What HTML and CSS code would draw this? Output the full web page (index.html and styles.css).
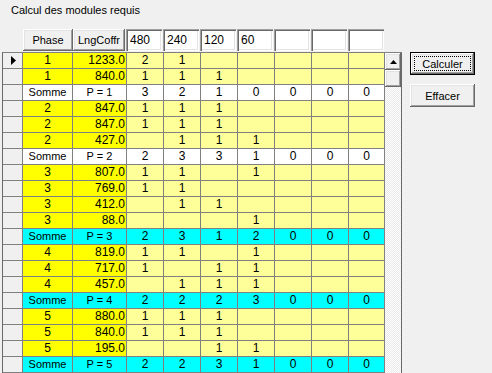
FILE: index.html
```html
<!DOCTYPE html>
<html>
<head>
    <link rel="stylesheet" href="styles.css">
</head>
<body>
    <div class="title">Calcul des modules requis</div>
    <div class="main">
        <div class="left">
            <div class="header">
                <div class="hbtn phase">Phase</div>
                <div class="hbtn lng">LngCoffr</div>
                <input class="hin" value="480">
                <input class="hin" value="240">
                <input class="hin" value="120">
                <input class="hin" value="60">
                <input class="hin" value="">
                <input class="hin" value="">
                <input class="hin" value="">
            </div>
            <div class="grid">
                <div id="rows" class="rows"></div>
                <div class="vscroll">
                    <div class="sb-up">
                        <svg width="7" height="4" viewBox="0 0 7 4"><polygon points="0,4 7,4 3.5,0" fill="#000"/></svg>
                    </div>
                    <div class="sb-thumb"></div>
                </div>
            </div>
        </div>
        <div class="actions">
            <button class="default">Calculer</button>
            <button>Effacer</button>
        </div>
    </div>
    <script>
        // kind: d = detail row, w = white total, c = cyan total
        const rows = [
            ['d', '1', '1233.0', '2', '1', '', '', '', '', ''],
            ['d', '1', '840.0', '1', '1', '1', '', '', '', ''],
            ['w', 'Somme', 'P = 1', '3', '2', '1', '0', '0', '0', '0'],
            ['d', '2', '847.0', '1', '1', '1', '', '', '', ''],
            ['d', '2', '847.0', '1', '1', '1', '', '', '', ''],
            ['d', '2', '427.0', '', '1', '1', '1', '', '', ''],
            ['w', 'Somme', 'P = 2', '2', '3', '3', '1', '0', '0', '0'],
            ['d', '3', '807.0', '1', '1', '', '1', '', '', ''],
            ['d', '3', '769.0', '1', '1', '', '', '', '', ''],
            ['d', '3', '412.0', '', '1', '1', '', '', '', ''],
            ['d', '3', '88.0', '', '', '', '1', '', '', ''],
            ['c', 'Somme', 'P = 3', '2', '3', '1', '2', '0', '0', '0'],
            ['d', '4', '819.0', '1', '1', '', '1', '', '', ''],
            ['d', '4', '717.0', '1', '', '1', '1', '', '', ''],
            ['d', '4', '457.0', '', '1', '1', '1', '', '', ''],
            ['c', 'Somme', 'P = 4', '2', '2', '2', '3', '0', '0', '0'],
            ['d', '5', '880.0', '1', '1', '1', '', '', '', ''],
            ['d', '5', '840.0', '1', '1', '1', '', '', '', ''],
            ['d', '5', '195.0', '', '', '1', '1', '', '', ''],
            ['c', 'Somme', 'P = 5', '2', '2', '3', '1', '0', '0', '0'],
        ];

        const grid = document.getElementById('rows');

        function cell(cls, text) {
            const el = document.createElement('div');
            el.className = cls;
            el.textContent = text;
            grid.appendChild(el);
            return el;
        }

        rows.forEach(function(r, i) {
            const kind = r[0];
            const ind = cell('ind', '');
            if (i === 0) {
                ind.innerHTML = '<svg width="5" height="9" viewBox="0 0 5 9"><polygon points="0,0 5,4.5 0,9" fill="#000"/></svg>';
            }
            if (kind === 'd') {
                cell('ph', r[1]);
                cell('lg', r[2]);
                for (let k = 3; k < 10; k++) {
                    cell('m', r[k]);
                }
            } else {
                const bg = kind === 'c' ? 'sum cyan' : 'sum';
                cell(bg + ' lbl', r[1]);
                cell(bg + ' lbl', r[2]);
                for (let k = 3; k < 10; k++) {
                    cell(bg, r[k]);
                }
            }
        });
    </script>
</body>
</html>
```

FILE: styles.css
```css
html, body {
    margin: 0;
    height: 373px;
    overflow: hidden;
}
body {
    background-color: #f0f0f0;
    font-family: "Liberation Sans", Arial, sans-serif;
    font-size: 11px;
    color: #000;
}
.title {
    padding: 4px 0 0 11px;
    line-height: 13px;
}
.main {
    display: flex;
    margin-top: 12px;
}
.left {
    margin-left: 2px;
    width: 400px;
}
.header {
    display: flex;
    height: 22px;
    padding-left: 21px;
}
.hbtn {
    box-sizing: border-box;
    height: 22px;
    line-height: 22px;
    text-align: center;
    background-color: #f0f0f0;
    box-shadow: inset -1px -1px #696969, inset 1px 1px #fff, inset -2px -2px #a0a0a0, inset 2px 2px #e3e3e3;
}
.phase {
    width: 50px;
}
.lng {
    width: 52px;
}
.hin {
    box-sizing: border-box;
    width: 36px;
    height: 22px;
    margin: 0 0 0 1px;
    padding: 0 0 0 4px;
    border: none;
    background-color: #fff;
    font-family: "Liberation Sans", Arial, sans-serif;
    font-size: 12px;
    color: #000;
    box-shadow: inset 1px 1px #a0a0a0, inset 2px 2px #696969, inset -1px -1px #fff, inset -2px -2px #e3e3e3;
}
.grid {
    display: flex;
    height: 321px;
    margin-top: 1px;
    border-top: 1px solid #808080;
    border-left: 1px solid #696969;
    border-right: 1px solid #696969;
    overflow: hidden;
}
.rows {
    display: grid;
    grid-template-columns: 20px 50px 54px repeat(6, 37px) 36px;
    grid-auto-rows: 16px;
    align-content: start;
    width: 382px;
    background-color: #fff;
    font-size: 12px;
}
.rows > div {
    box-sizing: border-box;
    border-right: 1px solid #808080;
    border-bottom: 1px solid #808080;
    line-height: 15px;
    text-align: center;
    white-space: nowrap;
    overflow: hidden;
}
.rows > .ind {
    display: flex;
    align-items: center;
    padding-left: 8px;
    background-color: #f0f0f0;
}
.rows > .ph {
    background-color: #ffff00;
}
.rows > .lg {
    background-color: #ffff00;
    text-align: right;
    padding-right: 1px;
}
.rows > .m {
    background-color: #ffff99;
}
.rows > .sum {
    background-color: #fff;
}
.rows > .cyan {
    background-color: #00ffff;
}
.rows > .lbl {
    font-size: 11px;
}
.vscroll {
    width: 16px;
    display: flex;
    flex-direction: column;
    background: repeating-conic-gradient(#eaeaea 0 25%, #fff 0 50%) 0 0 / 2px 2px;
}
.sb-up, .sb-thumb {
    box-sizing: border-box;
    height: 17px;
    background-color: #f0f0f0;
    box-shadow: inset -1px -1px #696969, inset 1px 1px #fff, inset -2px -2px #a0a0a0, inset 2px 2px #e3e3e3;
}
.sb-up {
    display: flex;
    align-items: center;
    justify-content: center;
}
.actions {
    display: flex;
    flex-direction: column;
    gap: 9px;
    margin-left: 8px;
    padding-top: 23px;
}
button {
    box-sizing: border-box;
    width: 65px;
    height: 23px;
    padding: 0;
    border: none;
    background-color: #f0f0f0;
    font-family: "Liberation Sans", Arial, sans-serif;
    font-size: 11px;
    color: #000;
    box-shadow: inset -1px -1px #696969, inset 1px 1px #fff, inset -2px -2px #a0a0a0, inset 2px 2px #e3e3e3;
}
.default {
    border: 1px solid #000;
    outline: 1px dotted #000;
    outline-offset: -5px;
}
```
